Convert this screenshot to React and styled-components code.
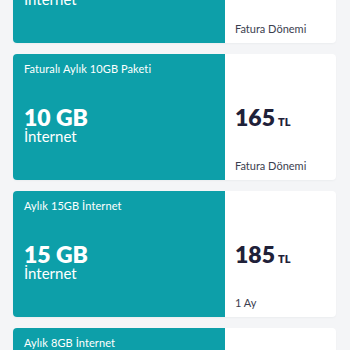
import React from "react";
import styled, { createGlobalStyle } from "styled-components";

const packages = [
  { title: "Aylık 5GB İnternet", amount: "5 GB", price: "135", period: "Fatura Dönemi" },
  { title: "Faturalı Aylık 10GB Paketi", amount: "10 GB", price: "165", period: "Fatura Dönemi" },
  { title: "Aylık 15GB İnternet", amount: "15 GB", price: "185", period: "1 Ay" },
  { title: "Aylık 8GB İnternet", amount: "8 GB", price: "155", period: "1 Ay" },
];

function App() {
  return (
    <>
      <GlobalStyle />
      <Page>
        <List>
          {packages.map((p) => (
            <Card key={p.title}>
              <Left>
                <Title>{p.title}</Title>
                <Amount>{p.amount}</Amount>
                <Unit>İnternet</Unit>
              </Left>
              <Right>
                <Price>
                  {p.price}
                  <Currency>TL</Currency>
                </Price>
                <Period>{p.period}</Period>
              </Right>
            </Card>
          ))}
        </List>
      </Page>
    </>
  );
}

export default App;

const GlobalStyle = createGlobalStyle`
  html, body {
    margin: 0;
    padding: 0;
    background: #f4f5f7;
    overflow: hidden;
  }
  body {
    font-family: Lato, "Noto Sans", sans-serif;
  }
`;

const Page = styled.div`
  width: 350px;
  height: 350px;
  overflow: hidden;
  background: #f4f5f7;
`;

const List = styled.div`
  display: flex;
  flex-direction: column;
  gap: 11px;
  margin-top: -83px;
  padding: 0 14px 0 13px;
`;

const Card = styled.div`
  display: flex;
  height: 126px;
  border-radius: 4px;
  overflow: hidden;
  background: #ffffff;
  box-shadow: 0 1px 2px rgba(30, 40, 60, 0.04);
`;

const Left = styled.div`
  width: 212px;
  flex-shrink: 0;
  display: flex;
  flex-direction: column;
  padding: 7px 11px 0;
  box-sizing: border-box;
  background: #0d9fa9;
  color: #ffffff;
`;

const Title = styled.div`
  font-size: 11px;
  line-height: 16px;
  font-weight: 400;
  letter-spacing: 0.1px;
`;

const Amount = styled.div`
  margin-top: 29px;
  font-size: 23px;
  line-height: 22px;
  font-weight: 800;
`;

const Unit = styled.div`
  font-size: 15px;
  line-height: 16px;
  font-weight: 400;
`;

const Right = styled.div`
  flex: 1;
  display: flex;
  flex-direction: column;
  padding: 52px 10px 6px;
  box-sizing: border-box;
`;

const Price = styled.div`
  display: flex;
  align-items: baseline;
  gap: 3px;
  font-size: 23px;
  line-height: 22px;
  font-weight: 800;
  color: #1f2139;
`;

const Currency = styled.span`
  font-size: 11px;
  font-weight: 800;
`;

const Period = styled.div`
  margin-top: auto;
  font-size: 11px;
  line-height: 16px;
  color: #3b3e4f;
`;
